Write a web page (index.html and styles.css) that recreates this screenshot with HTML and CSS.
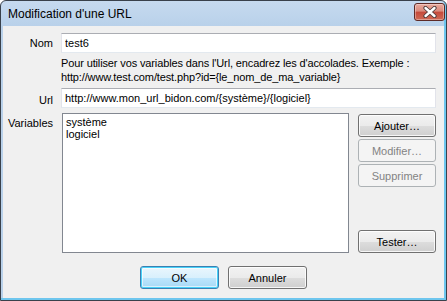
FILE: index.html
```html
<!DOCTYPE html>
<html lang="fr">
<head>
<meta charset="utf-8">
<title>Modification d'une URL</title>
<link rel="stylesheet" href="styles.css">
</head>
<body>
<div class="window">
  <div class="titlebar">
    <span class="title">Modification d'une URL</span>
    <button class="close" aria-label="Fermer">
      <svg width="16" height="12" viewBox="0 0 16 12">
        <path d="M3.5 2 L12.5 10 M12.5 2 L3.5 10" stroke="#4a3a3a" stroke-width="4.2" stroke-linecap="round" fill="none"/>
        <path d="M3.5 2 L12.5 10 M12.5 2 L3.5 10" stroke="#ffffff" stroke-width="2.4" stroke-linecap="round" fill="none"/>
      </svg>
    </button>
  </div>
  <div class="client">
    <div class="form">
      <label class="lbl lbl-nom">Nom</label>
      <div class="field field-nom"><input class="textbox" type="text" value="test6"></div>

      <div class="help">Pour utiliser vos variables dans l'Url, encadrez les d'accolades. Exemple :<br>http://www.test.com/test.php?id={le_nom_de_ma_variable}</div>

      <label class="lbl lbl-url">Url</label>
      <div class="field field-url"><input class="textbox" type="text" value="http://www.mon_url_bidon.com/{système}/{logiciel}"></div>

      <label class="lbl lbl-var">Variables</label>
      <div class="vars">
        <div class="listbox">
          <div class="item">système</div>
          <div class="item">logiciel</div>
        </div>
        <div class="side">
          <button class="btn">Ajouter…</button>
          <button class="btn" disabled>Modifier…</button>
          <button class="btn" disabled>Supprimer</button>
          <button class="btn btn-test">Tester…</button>
        </div>
      </div>
    </div>
    <div class="actions">
      <button class="btn btn-default">OK</button>
      <button class="btn">Annuler</button>
    </div>
  </div>
</div>
</body>
</html>
```

FILE: styles.css
```css
* { box-sizing: border-box; }
html, body { margin: 0; padding: 0; background: #ffffff; }
body { width: 447px; height: 301px; overflow: hidden; font-family: "Liberation Sans", Arial, sans-serif; font-size: 11px; color: #000; }

.window {
  width: 447px;
  height: 301px;
  border: 1px solid #39414b;
  border-radius: 6px 6px 0 0;
  background: linear-gradient(#c6daef, #b9d1ea 25px, #b9d1ea);
  box-shadow: inset -2px -2px 0 #6ec6ee;
  display: flex;
  flex-direction: column;
  padding: 0 2px 2px 2px;
}

.titlebar {
  height: 25px;
  display: flex;
  align-items: center;
  justify-content: space-between;
  padding: 0 1px 0 6px;
  margin: 0 -2px;
}
.title { font-size: 12px; color: #000; padding-left: 1px; }

.close {
  width: 31px;
  height: 18px;
  margin-top: -3px;
  padding: 0;
  border: 1px solid #5e2a26;
  border-radius: 3px;
  background: linear-gradient(#e9a99d, #d98a7c 45%, #c5493a 50%, #cf6a55);
  box-shadow: inset 0 0 0 1px rgba(255,255,255,0.35);
  display: flex;
  align-items: center;
  justify-content: center;
}

.client {
  flex: 1;
  background: #f0f0f0;
  display: flex;
  flex-direction: column;
}

.form {
  display: grid;
  grid-template-columns: 50px 1fr;
  column-gap: 8px;
  padding: 7px 8px 0 0;
  align-items: center;
}

.lbl { text-align: right; line-height: 13px; }
.lbl-var { align-self: start; margin-top: 4px; }

.textbox {
  display: block;
  width: 100%;
  height: 20px;
  margin: 0;
  padding: 0 3px;
  font: 11px "Liberation Sans", Arial, sans-serif;
  color: #000;
  background: #fff;
  border: 1px solid;
  border-color: #abadb3 #e2e3ea #e3e9ef #e2e3ea;
  outline: none;
}

.help {
  grid-column: 2;
  line-height: 14px;
  margin-top: 3px;
  margin-bottom: 4px;
  letter-spacing: -0.13px;
}

.field-url { margin-bottom: 5px; }

.vars {
  display: flex;
  gap: 9px;
  align-items: stretch;
}
.listbox {
  flex: 1;
  height: 140px;
  background: #fff;
  border: 1px solid #828790;
  padding: 2px 3px;
  margin-left: 1px;
}
.item { line-height: 12px; }

.side {
  width: 78px;
  display: flex;
  flex-direction: column;
  gap: 2px;
  padding-top: 1px;
}

.btn {
  width: 78px;
  height: 23px;
  margin: 0;
  padding: 0;
  font: 11px "Liberation Sans", Arial, sans-serif;
  color: #000;
  border: 1px solid #707070;
  border-radius: 3px;
  background: linear-gradient(#f2f2f2 0%, #ebebeb 50%, #dddddd 51%, #cfcfcf 100%);
  box-shadow: inset 0 0 0 1px rgba(255,255,255,0.8);
}
.btn:disabled {
  color: #838383;
  border-color: #adb2b5;
  background: #f4f4f4;
  box-shadow: none;
}
.btn-test { margin-top: auto; }

.actions {
  display: flex;
  justify-content: center;
  gap: 9px;
  margin-top: 13px;
}
.actions .btn { width: 79px; }
.btn-default {
  border-color: #3c7fb1;
  background: linear-gradient(#eaf6fd 0%, #d9f0fc 50%, #bee6fd 51%, #a7d9f5 100%);
  box-shadow: inset 0 0 0 1px #48d2f9, inset 0 0 0 2px rgba(255,255,255,0.6);
}
```
